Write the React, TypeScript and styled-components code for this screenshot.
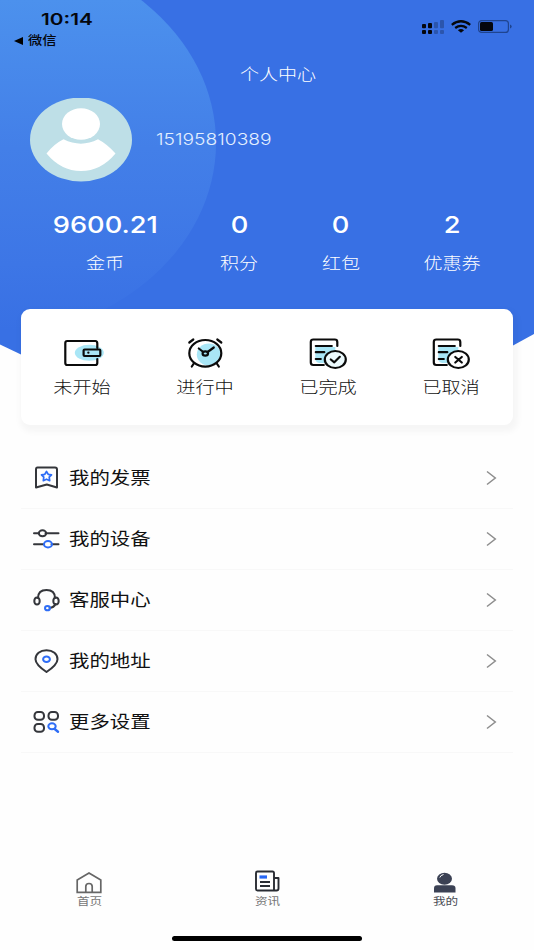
import React from 'react';
import styled, { createGlobalStyle } from 'styled-components';

const GlobalStyle = createGlobalStyle`
  * { box-sizing: border-box; }
  body {
    margin: 0;
    background: #fff;
    font-family: Inter, "Noto Sans CJK SC", sans-serif;
  }
  svg { display: block; flex: none; }
`;

const Screen = styled.div`
  width: 534px;
  height: 950px;
  display: flex;
  flex-direction: column;
  overflow: hidden;
  background: #fefefe;
`;

const Header = styled.header`
  height: 309px;
  flex: none;
  position: relative;
  color: #fff;
`;

const Backdrop = styled.svg`
  position: absolute;
  left: 0;
  top: 0;
`;

const HeaderContent = styled.div`
  position: relative;
  display: flex;
  flex-direction: column;
`;

/* Wide lettering: each label is stretched horizontally from its anchor. */
const Wide = styled.span<{
  $size: number;
  $x?: number;
  $weight?: number;
  $color?: string;
  $origin?: string;
  $line?: number;
}>`
  display: block;
  white-space: nowrap;
  font-size: ${(p) => p.$size}px;
  line-height: ${(p) => p.$line ?? 24}px;
  font-weight: ${(p) => p.$weight ?? 400};
  color: ${(p) => p.$color ?? 'inherit'};
  transform: scaleX(${(p) => p.$x ?? 1.19});
  transform-origin: ${(p) => p.$origin ?? 'center'};
`;

const StatusBar = styled.div`
  height: 50px;
  display: flex;
  justify-content: space-between;
  padding: 9px 22px 0 14px;
  color: #05070d;
`;

const Clock = styled.div`
  display: flex;
  flex-direction: column;
`;

const Time = styled.div`
  padding-left: 27px;
`;

const BackTo = styled.div`
  display: flex;
  align-items: center;
  gap: 5px;
`;

const StatusIcons = styled.div`
  display: flex;
  gap: 7px;
  padding-top: 11px;
`;

const TitleBar = styled.div`
  height: 48px;
  display: flex;
  justify-content: center;
  padding: 12px 0 0 22px;
`;

const Profile = styled.div`
  height: 84px;
  display: flex;
  align-items: center;
  gap: 24px;
  padding-left: 30px;
`;

const Stats = styled.div`
  display: grid;
  grid-template-columns: 168px 101px 102px 121px;
  padding: 29px 21px 0;
`;

const Stat = styled.div`
  display: flex;
  flex-direction: column;
  align-items: center;
  gap: 12px;
`;

const OrderCard = styled.section`
  position: relative;
  flex: none;
  height: 116px;
  margin: 0 21px;
  padding-top: 26px;
  display: grid;
  grid-template-columns: repeat(4, 1fr);
  border-radius: 9px;
  background: #fff;
  box-shadow: 2px 4px 6px 3px rgba(0, 0, 0, 0.035);
`;

const Order = styled.div`
  display: flex;
  flex-direction: column;
  align-items: center;
`;

const List = styled.ul`
  list-style: none;
  margin: 23px 21px 0;
  padding: 0;
`;

const Row = styled.li`
  height: 61px;
  display: flex;
  align-items: center;
  padding: 0 16px 0 12px;
  gap: 8px;
  border-bottom: 1px solid #f8f8f8;
`;

const RowLabel = styled.div`
  flex: 1;
  display: flex;
`;

const Tabs = styled.nav`
  margin-top: auto;
  height: 66px;
  flex: none;
  display: grid;
  grid-template-columns: repeat(3, 1fr);
`;

const Tab = styled.div`
  display: flex;
  flex-direction: column;
  align-items: center;
`;

const HomeIndicator = styled.div`
  flex: none;
  width: 190px;
  height: 5px;
  margin: 0 auto 9px;
  border-radius: 3px;
  background: #000;
`;

const HeaderShape = () => (
  <Backdrop width="534" height="424" viewBox="0 0 534 424">
    <defs>
      <linearGradient id="glow" gradientUnits="userSpaceOnUse" x1="0" y1="0" x2="0" y2="330">
        <stop offset="0" stopColor="#4c91ed" />
        <stop offset="0.45" stopColor="#437fe8" />
        <stop offset="0.8" stopColor="#3d76e6" />
        <stop offset="1" stopColor="#3870e4" />
      </linearGradient>
    </defs>
    <path d="M0 0H534V334L513 345.500L267 424L21 354.500L0 344.500Z" fill="#3870e4" />
    <ellipse cx="-24" cy="143" rx="240" ry="197" fill="url(#glow)" />
  </Backdrop>
);

const Avatar = () => (
  <svg width="102" height="84" viewBox="0 0 102 84">
    <ellipse cx="51" cy="41.500" rx="51" ry="42" fill="#bedfe7" />
    <ellipse cx="51" cy="26" rx="19" ry="15.800" fill="#fff" />
    <path d="M33.500 41.300Q51 50 68 41.300Q77 46 85.500 55.500Q71 73 51 73Q31 73 16.500 55.500Q24 46 33.500 41.300Z" fill="#fff" />
  </svg>
);

const Signal = () => (
  <svg width="22" height="14" viewBox="0 0 22 14" fill="#05070d">
    <rect x="0" y="4" width="4" height="4.300" rx="1" />
    <rect x="0" y="10" width="4" height="4" rx="1" />
    <rect x="6" y="3" width="4" height="5.300" rx="1" />
    <rect x="6" y="10" width="4" height="4" rx="1" />
    <g opacity=".25">
      <rect x="12" y="2" width="4" height="6.300" rx="1" />
      <rect x="12" y="10" width="4" height="4" rx="1" />
      <rect x="18" y="0" width="4" height="8.300" rx="1" />
      <rect x="18" y="10" width="4" height="4" rx="1" />
    </g>
  </svg>
);

const Wifi = () => (
  <svg width="20" height="13" viewBox="0 0 20 13" fill="none" stroke="#05070d" strokeWidth="2.300">
    <path d="M.8 4.800Q10-2.200 19.200 4.800" />
    <path d="M4.200 8Q10 3.700 15.800 8" />
    <path d="M6.900 10.200Q10 7.900 13.100 10.200L10 12.800Z" fill="#05070d" stroke="none" />
  </svg>
);

const Battery = () => (
  <svg width="34" height="14" viewBox="0 0 34 14">
    <rect x=".6" y=".6" width="29.800" height="11.800" rx="3" fill="none" stroke="#1f448f" strokeWidth="1.200" />
    <rect x="2" y="2" width="13" height="9" rx="1.600" fill="#05070d" />
    <path d="M32 4.500Q33.700 5.100 33.700 6.500Q33.700 7.900 32 8.500Z" fill="#1f448f" />
  </svg>
);

const OrderSvg = styled.svg.attrs({ width: 42, height: 36, viewBox: '0.7 0 42 36' })`
  fill: none;
  stroke: #0b0b0b;
  stroke-width: 2.2;
  stroke-linecap: round;
  stroke-linejoin: round;
`;

const WalletIcon = () => (
  <OrderSvg>
    <ellipse cx="28" cy="17.800" rx="14.500" ry="8" fill="#a9e6f6" stroke="none" />
    <path d="M36 13V8.500Q36 6 34 6H6Q4 6 4 8V28Q4 30 6 30H34Q36 30 36 28V24" />
    <rect x="22.300" y="14.500" width="16.700" height="6.500" rx="1" />
    <path d="M27 17.700h.1" />
  </OrderSvg>
);

const AlarmIcon = () => (
  <OrderSvg>
    <ellipse cx="24.500" cy="19.500" rx="12" ry="11" fill="#a9e6f6" stroke="none" />
    <ellipse cx="21" cy="18.300" rx="16" ry="13.300" />
    <path d="M5 7.500L9 4.500M33 4.500L37 7.500M9.500 28.500L7.500 31.500M32.500 28.500L34.500 31.500M14.500 13.500L19 17M23.300 17L29.500 12.500" />
    <ellipse cx="21" cy="18.500" rx="2.700" ry="2.200" />
  </OrderSvg>
);

const DocumentIcon = ({ cancelled }: { cancelled?: boolean }) => (
  <OrderSvg>
    <path d="M8 12H28V28H12Q8 27 8 24Z" fill="#a9e6f6" stroke="none" />
    <path d="M30 11V7Q30 4.500 27.500 4.500H6Q3.500 4.500 3.500 7V27.500Q3.500 30 6 30H16.500M8.500 11H24.500M8.500 17.200H17M8.500 24H13.500" />
    <ellipse cx="28" cy="24.500" rx="10.500" ry="8.500" fill={cancelled ? '#fff' : '#ecfafd'} />
    {cancelled ? <path d="M25 22L31.500 27.500M31.500 22L25 27.500" /> : <path d="M23.500 24.500L27 27.300L32.500 21.800" />}
  </OrderSvg>
);

const RowSvg = styled.svg.attrs({ width: 28, height: 26, viewBox: '0 0 28 26' })`
  fill: none;
  stroke: #34363b;
  stroke-width: 2;
  stroke-linecap: round;
  stroke-linejoin: round;
`;

const BLUE = '#2e6df6';

const InvoiceIcon = () => (
  <RowSvg>
    <path d="M4.500 2.500H22Q24 2.500 24 4.500V22.500L13.800 19.500L3 22.500V4.500Q3 2.500 4.500 2.500Z" />
    <path d="M13.500 6.500L15.200 9.300L18.500 9.800L16.200 12.200L16.700 15.700L13.500 14.200L10.300 15.700L10.800 12.200L8.500 9.800L11.800 9.300Z" stroke={BLUE} strokeWidth="1.700" />
  </RowSvg>
);

const DeviceIcon = () => (
  <RowSvg>
    <path d="M1 7.300H6M12.500 7.300H25.500M1 18.300H11M18.500 18.300H25.500" />
    <ellipse cx="9.500" cy="7.300" rx="3.700" ry="3" />
    <ellipse cx="15" cy="18.300" rx="4" ry="3.200" stroke={BLUE} />
  </RowSvg>
);

const SupportIcon = () => (
  <RowSvg>
    <path d="M5 11Q5 3 13.500 3Q22 3 22 11M22.500 17Q21 20.500 16.500 21" />
    <ellipse cx="4" cy="14" rx="2.700" ry="3.600" />
    <ellipse cx="23" cy="14" rx="2.700" ry="3.600" />
    <ellipse cx="14.500" cy="21.200" rx="2.500" ry="2.100" stroke={BLUE} />
  </RowSvg>
);

const AddressIcon = () => (
  <RowSvg>
    <path d="M13.500 24Q2.500 16.500 2.500 11.200C2.500 6 7 2.200 13.500 2.200S24.500 6 24.500 11.200Q24.500 16.500 13.500 24Z" />
    <ellipse cx="13.500" cy="11.300" rx="3.400" ry="2.800" stroke={BLUE} />
  </RowSvg>
);

const MoreIcon = () => (
  <RowSvg>
    <rect x="1.500" y="3" width="9.500" height="7.800" rx="3.400" />
    <rect x="15.500" y="3" width="9.500" height="7.800" rx="3.400" />
    <rect x="1.500" y="15" width="9.500" height="7.800" rx="3.400" />
    <ellipse cx="19" cy="17.300" rx="3.700" ry="3" stroke={BLUE} />
    <path d="M21.700 20L25 22.700" stroke={BLUE} strokeWidth="2.400" />
  </RowSvg>
);

const Chevron = () => (
  <svg width="12" height="16" viewBox="0 0 12 16" fill="none" stroke="#8d8d8d" strokeWidth="1.500">
    <path d="M2 1.500L10.300 8L2 14.500" />
  </svg>
);

const HomeIcon = () => (
  <svg width="26" height="24" viewBox="0 0 26 24" fill="none" stroke="#666" strokeWidth="1.700">
    <path d="M1.200 22.300V10L13 3L24.800 10V22.300ZM9.800 22V16.500Q9.800 13.500 13 13.500Q16.200 13.500 16.200 16.500V22" />
  </svg>
);

const NewsIcon = () => (
  <svg width="26" height="24" viewBox="0 0 26 24" fill="none" stroke="#292c33" strokeWidth="1.900" strokeLinejoin="round">
    <path d="M20 20.500V3Q20 1.500 18.500 1.500H3.500Q2 1.500 2 3V19Q2 20.500 3.500 20.500H22.500Q24.500 20.500 24.500 18.500V8H20.500M6 12H16M6 16H16" />
    <path d="M5.500 7H13" stroke="#2666f5" strokeWidth="3.200" />
  </svg>
);

const MeIcon = () => (
  <svg width="26" height="24" viewBox="0 0 26 24" fill="#3b4154">
    <ellipse cx="12.500" cy="8.700" rx="7.500" ry="6" />
    <path d="M2 22.500V18.500Q2 15.300 5 15.300H20Q23.500 15.300 23.500 18.500V22.500Z" />
    <path d="M7.800 7.500Q8.500 5.200 11.500 4.500" fill="none" stroke="#fff" strokeWidth="1" />
  </svg>
);

const stats = [
  { value: '9600.21', label: '金币' },
  { value: '0', label: '积分' },
  { value: '0', label: '红包' },
  { value: '2', label: '优惠券' },
];

const orders = [
  { label: '未开始', icon: <WalletIcon /> },
  { label: '进行中', icon: <AlarmIcon /> },
  { label: '已完成', icon: <DocumentIcon /> },
  { label: '已取消', icon: <DocumentIcon cancelled /> },
];

const rows = [
  { label: '我的发票', icon: <InvoiceIcon /> },
  { label: '我的设备', icon: <DeviceIcon /> },
  { label: '客服中心', icon: <SupportIcon /> },
  { label: '我的地址', icon: <AddressIcon /> },
  { label: '更多设置', icon: <MoreIcon /> },
];

const tabs = [
  { label: '首页', icon: <HomeIcon />, color: '#777' },
  { label: '资讯', icon: <NewsIcon />, color: '#777' },
  { label: '我的', icon: <MeIcon />, color: '#4a4c54' },
];

export default function App() {
  return (
    <>
      <GlobalStyle />
      <Screen>
        <Header>
          <HeaderShape />
          <HeaderContent>
            <StatusBar>
              <Clock>
                <Time>
                  <Wide $size={16} $weight={600} $x={1.3} $line={21} $origin="left">10:14</Wide>
                </Time>
                <BackTo>
                  <svg width="9" height="8" viewBox="0 0 9 8"><path d="M0 4L9 0V8Z" /></svg>
                  <Wide $size={12} $weight={500} $line={21} $origin="left">微信</Wide>
                </BackTo>
              </Clock>
              <StatusIcons>
                <Signal />
                <Wifi />
                <Battery />
              </StatusIcons>
            </StatusBar>
            <TitleBar>
              <Wide $size={16} $weight={300}>个人中心</Wide>
            </TitleBar>
            <Profile>
              <Avatar />
              <Wide $size={15.5} $weight={300} $x={1.24} $origin="left" $color="#e3efff">15195810389</Wide>
            </Profile>
            <Stats>
              {stats.map((s) => (
                <Stat key={s.label}>
                  <Wide $size={23.5} $weight={450} $x={1.16} $line={28}>{s.value}</Wide>
                  <Wide $size={16} $weight={300}>{s.label}</Wide>
                </Stat>
              ))}
            </Stats>
          </HeaderContent>
        </Header>
        <OrderCard>
          {orders.map((o) => (
            <Order key={o.label}>
              {o.icon}
              <Wide $size={16} $x={1.2} $weight={300} $line={33} $color="#111">{o.label}</Wide>
            </Order>
          ))}
        </OrderCard>
        <List>
          {rows.map((r) => (
            <Row key={r.label}>
              {r.icon}
              <RowLabel>
                <Wide $size={17} $x={1.2} $origin="left" $color="#111">{r.label}</Wide>
              </RowLabel>
              <Chevron />
            </Row>
          ))}
        </List>
        <Tabs>
          {tabs.map((t) => (
            <Tab key={t.label}>
              {t.icon}
              <Wide $size={10.5} $x={1.2} $line={15} $color={t.color}>{t.label}</Wide>
            </Tab>
          ))}
        </Tabs>
        <HomeIndicator />
      </Screen>
    </>
  );
}
